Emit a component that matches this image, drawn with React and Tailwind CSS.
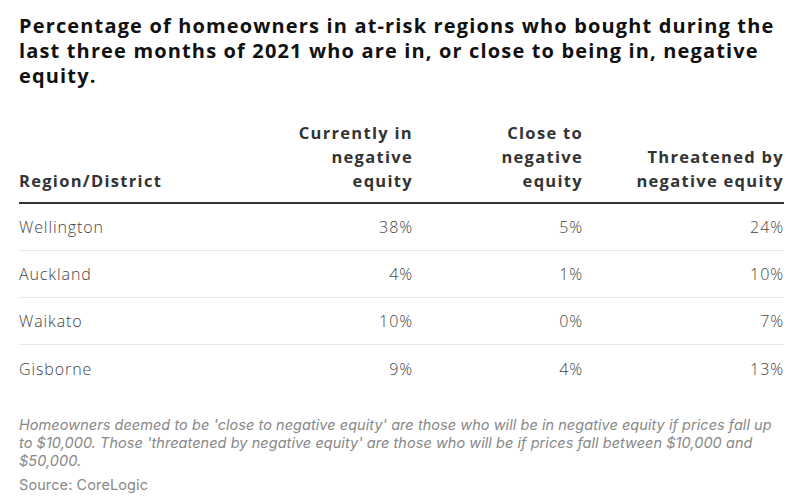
const rows = [
  { region: "Wellington", current: "38%", close: "5%", threatened: "24%" },
  { region: "Auckland", current: "4%", close: "1%", threatened: "10%" },
  { region: "Waikato", current: "10%", close: "0%", threatened: "7%" },
  { region: "Gisborne", current: "9%", close: "4%", threatened: "13%" },
];

const grid = "grid grid-cols-[1fr_160px_170px_201px]";

export default function App() {
  return (
    <div className="min-h-[502px] w-[804px] bg-white px-[19px] pt-[13px] font-['Open_Sans',sans-serif] text-[#1d1d1d]">
      <h1 className="whitespace-nowrap text-[20px] font-bold leading-[25px] tracking-[1.15px] text-[#111]">
        Percentage of homeowners in at-risk regions who bought during the
        <br />
        last three months of 2021 who are in, or close to being in, negative
        <br />
        equity.
      </h1>

      <div className="mt-[33px] w-[765px]">
        <div className={`${grid} items-end border-b-2 border-[#333] pb-[9px] text-[16.5px] font-bold leading-[24px] tracking-[1.3px] text-[#333]`}>
          <div>Region/District</div>
          <div className="text-right">
            Currently in
            <br />
            negative
            <br />
            equity
          </div>
          <div className="text-right">
            Close to
            <br />
            negative
            <br />
            equity
          </div>
          <div className="text-right">
            Threatened by
            <br />
            negative equity
          </div>
        </div>

        {rows.map((row, i) => (
          <div
            key={row.region}
            className={`${grid} h-[47px] items-center text-[16px] font-light tracking-[0.9px] text-[#444] ${i < rows.length - 1 ? "border-b border-[#e6e6e6]" : ""}`}
          >
            <div>{row.region}</div>
            <div className="text-right">{row.current}</div>
            <div className="text-right">{row.close}</div>
            <div className="text-right">{row.threatened}</div>
          </div>
        ))}
      </div>

      <p className="mt-[24px] whitespace-nowrap font-['Inter',sans-serif] text-[14.5px] italic leading-[18px] tracking-[0.05px] text-[#888]">
        Homeowners deemed to be 'close to negative equity' are those who will be in negative equity if prices fall up
        <br />
        to $10,000. Those 'threatened by negative equity' are those who will be if prices fall between $10,000 and
        <br />
        $50,000.
      </p>
      <p className="mt-[6px] font-['Inter',sans-serif] text-[14.5px] leading-[18px] tracking-[0.1px] text-[#888]">Source: CoreLogic</p>
    </div>
  );
}
